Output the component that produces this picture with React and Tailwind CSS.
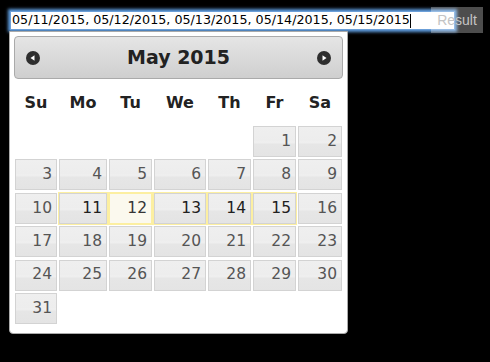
import React from "react";

const colWidths = ["w-[44px]", "w-[50px]", "w-[45px]", "w-[54px]", "w-[45px]", "w-[45px]", "w-[46px]"];
const dayNames = ["Su", "Mo", "Tu", "We", "Th", "Fr", "Sa"];
const selected = [11, 12, 13, 14, 15];

function buildWeeks() {
  // May 2015 starts on a Friday
  const cells = [null, null, null, null, null];
  for (let d = 1; d <= 31; d++) cells.push(d);
  while (cells.length % 7) cells.push(null);
  const weeks = [];
  for (let i = 0; i < cells.length; i += 7) weeks.push(cells.slice(i, i + 7));
  return weeks;
}

function NavIcon({ dir }) {
  return (
    <svg width="14" height="14" viewBox="0 0 14 14">
      <circle cx="7" cy="7" r="7" fill="#2e2e2e" />
      {dir === "prev" ? (
        <path d="M4.5 7 L8.5 4.2 L8.5 9.8 Z" fill="#ffffff" />
      ) : (
        <path d="M9.5 7 L5.5 4.2 L5.5 9.8 Z" fill="#ffffff" />
      )}
    </svg>
  );
}

function DayCell({ day, width }) {
  if (!day) return <div className={`${width} h-[33.4px]`} />;
  const isSel = selected.includes(day);
  const isToday = day === 12;
  return (
    <div
      className={`${width} h-[33.4px] ${
        isSel ? "border border-[#fcefa1]" : "p-px"
      }`}
    >
      <div
        className={`h-[31px] border flex items-center justify-end pr-[4px] text-[15.5px] ${
          isToday
            ? "border-[#fcefa1] bg-[#fbf9ee] text-[#363636]"
            : "border-[#d3d3d3] bg-[linear-gradient(to_bottom,#efefef_0%,#ededed_48%,#f0f0f0_52%,#e6e6e6_60%,#e4e4e4_100%)] " +
              (isSel ? "text-[#212121]" : "text-[#555555]")
        }`}
      >
        {day}
      </div>
    </div>
  );
}

export default function App() {
  const weeks = buildWeeks();

  return (
    <div className="min-h-screen w-[490px] bg-black font-['DejaVu_Sans',Verdana,sans-serif] relative">
      {/* Result label overlay */}
      <div className="absolute left-[431px] top-[7px] w-[52px] h-[26px] bg-white/30 flex items-center justify-center text-[14px] text-[#c4c4c4] font-['Liberation_Sans',Arial,sans-serif] z-10">
        Result
      </div>

      <div className="pt-[11px] pl-[10px]">
        {/* Input */}
        <div className="w-[445px] h-[19px] bg-white border border-[#6b9fd8] shadow-[0_0_3px_2px_#5f9de0] flex items-center pl-[1px] text-[12.7px] text-black leading-none">
          <span>05/11/2015, 05/12/2015, 05/13/2015, 05/14/2015, 05/15/2015</span>
          <span className="w-px h-[14px] bg-black" />
        </div>

        {/* Datepicker */}
        <div className="-ml-px mt-px w-[339px] bg-white border border-[#aaaaaa] rounded-b-[4px] px-[4px] pt-[4px] pb-[8px]">
          <div className="h-[43px] rounded-[4px] border border-[#aaaaaa] bg-[linear-gradient(to_bottom,#e5e5e5,#cfcfcf)] flex items-center justify-between px-[11px]">
            <NavIcon dir="prev" />
            <span className="text-[19px] font-bold text-[#222222]">May 2015</span>
            <NavIcon dir="next" />
          </div>

          <div className="flex h-[46px] items-center pt-[2px]">
            {dayNames.map((n, i) => (
              <div key={n} className={`${colWidths[i]} text-center text-[16px] font-bold text-[#222222]`}>
                {n}
              </div>
            ))}
          </div>

          <div className="flex flex-col">
            {weeks.map((week, wi) => (
              <div key={wi} className="flex">
                {week.map((d, i) => (
                  <DayCell key={i} day={d} width={colWidths[i]} />
                ))}
              </div>
            ))}
          </div>
        </div>
      </div>
    </div>
  );
}
